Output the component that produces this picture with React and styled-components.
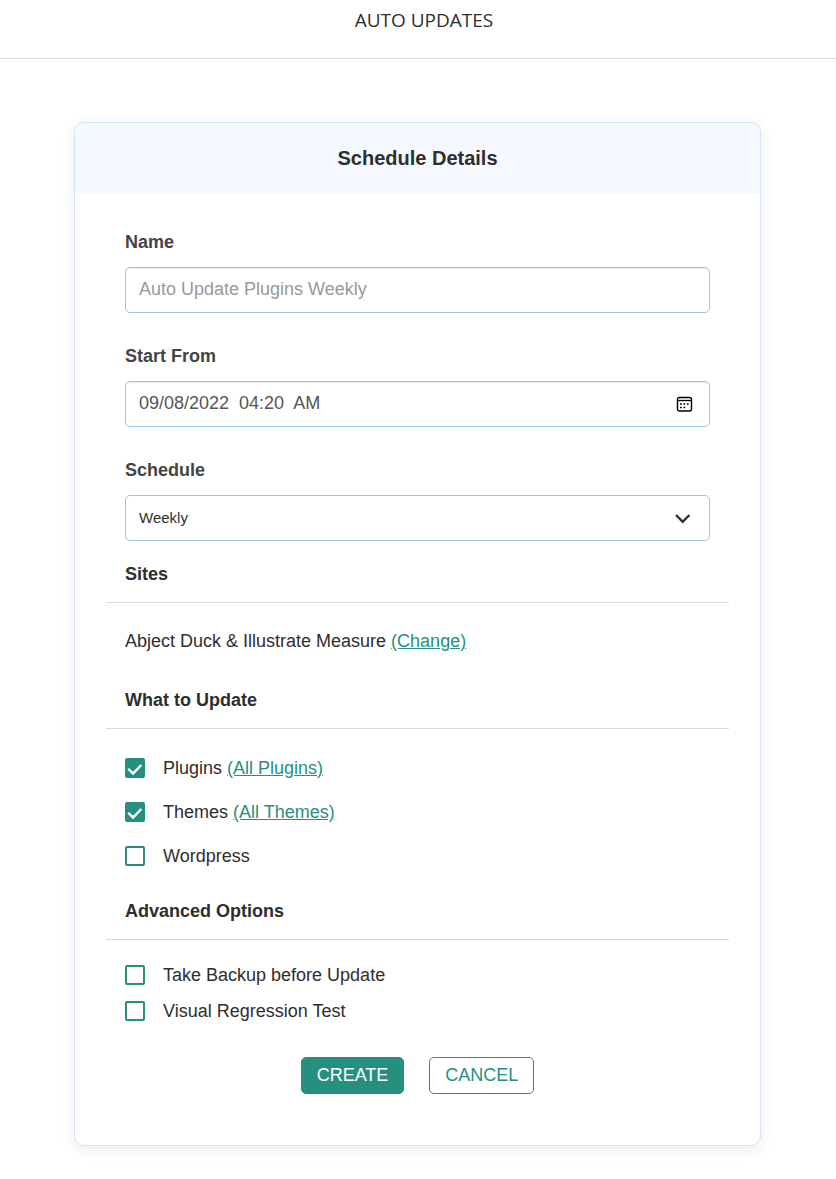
import React, { useState } from 'react';
import styled, { createGlobalStyle, ThemeProvider } from 'styled-components';

const theme = {
  green: '#259080',
  dark: '#2e2e2e',
  label: '#444444',
  placeholder: '#999999',
  fieldBorder: '#9fc3ef',
  cardBorder: '#d2e3fa',
  cardHeader: '#f5f9ff',
  line: '#dadada',
  fontSize: {
    s: '15px',
    m: '18px',
    title: '19px',
    l: '20px',
  },
};

const GlobalStyle = createGlobalStyle`
  *, *::before, *::after {
    box-sizing: border-box;
  }
  body {
    margin: 0;
    background-color: white;
    font-family: "Liberation Sans", Arial, sans-serif;
    font-size: 18px;
    line-height: 20px;
  }
`;

const PageHeader = styled.header`
  padding: 8px 16px 26px 28px;
  border-bottom: 1px solid ${({ theme }) => theme.line};
  text-align: center;
`;

const PageTitle = styled.h1`
  margin: 0;
  color: ${({ theme }) => theme.dark};
  font-family: 'Open Sans', sans-serif;
  font-size: ${({ theme }) => theme.fontSize.title};
  font-weight: 500;
  line-height: 24px;
`;

const Card = styled.main`
  margin: 63px 75px 33px 74px;
  border: 1px solid ${({ theme }) => theme.cardBorder};
  border-radius: 10px;
  box-shadow: 0 3px 16px rgba(0, 0, 0, 0.08);
  overflow: hidden;
`;

const CardHeader = styled.div`
  padding: 25px;
  background-color: ${({ theme }) => theme.cardHeader};
  text-align: center;
`;

const CardTitle = styled.h2`
  margin: 0;
  color: ${({ theme }) => theme.dark};
  font-size: ${({ theme }) => theme.fontSize.l};
  line-height: 20px;
`;

const Form = styled.form`
  padding: 39px 31px 51px;
`;

const Fields = styled.div`
  display: flex;
  flex-direction: column;
  gap: 33px;
  padding: 0 19px;
`;

const Field = styled.div`
  display: flex;
  flex-direction: column;
  gap: 15px;
`;

const Label = styled.label`
  color: ${({ theme }) => theme.label};
  font-weight: bold;
`;

const FieldBox = styled.div`
  display: flex;
  align-items: center;
  height: 46px;
  padding-right: ${({ $icon }) => ($icon ? '16px' : '0')};
  border: 1px solid ${({ theme }) => theme.fieldBorder};
  border-radius: 5px;
  box-shadow: ${({ $inset }) => ($inset ? 'inset 0 1px 1px rgba(0, 0, 0, 0.08)' : 'none')};
`;

const Input = styled.input`
  flex: 1;
  min-width: 0;
  height: 42px;
  padding: 0 13px 2px;
  border: 0;
  outline: 0;
  background-color: transparent;
  color: #555555;
  font-family: inherit;
  font-size: ${({ theme }) => theme.fontSize.m};

  &::placeholder {
    color: ${({ theme }) => theme.placeholder};
  }
`;

const Select = styled.select`
  flex: 1;
  min-width: 0;
  height: 44px;
  padding: 0 13px 2px;
  border: 0;
  outline: 0;
  appearance: none;
  background-color: transparent;
  color: ${({ theme }) => theme.dark};
  font-family: inherit;
  font-size: ${({ theme }) => theme.fontSize.s};
`;

const Section = styled.section`
  margin-top: ${({ $top }) => $top}px;
`;

const SectionTitle = styled.h3`
  margin: 0;
  padding: 0 19px 18px;
  border-bottom: 1px solid ${({ theme }) => theme.line};
  color: ${({ theme }) => theme.dark};
  font-size: ${({ theme }) => theme.fontSize.m};
  line-height: 20px;
`;

const SectionText = styled.p`
  margin: 28px 19px 0;
  color: ${({ theme }) => theme.dark};
`;

const Link = styled.a`
  margin-left: 5px;
  color: ${({ theme }) => theme.green};
  text-decoration: underline;
`;

const Options = styled.div`
  display: flex;
  flex-direction: column;
  gap: ${({ $compact }) => ($compact ? '16px' : '24px')};
  padding: ${({ $compact }) => ($compact ? '25px' : '29px')} 19px 0;
`;

const Option = styled.div`
  display: flex;
  align-items: center;
  color: ${({ theme }) => theme.dark};
`;

const OptionLabel = styled.label`
  display: flex;
  align-items: center;
  gap: 18px;
`;

const Checkbox = styled.input`
  display: grid;
  width: 20px;
  height: 20px;
  margin: 0;
  appearance: none;
  border: 2px solid ${({ theme }) => theme.green};
  border-radius: 2px;

  &:checked {
    background-color: ${({ theme }) => theme.green};
  }
  &:checked::before {
    content: '';
    background-color: white;
    clip-path: polygon(2% 60%, 12% 50%, 38% 74%, 84% 26%, 95% 36%, 38% 95%);
  }
`;

const Buttons = styled.div`
  display: flex;
  justify-content: center;
  gap: 25px;
  margin-top: 36px;
`;

const Button = styled.button`
  height: 37px;
  padding: 0 15px;
  border: 1px solid ${({ theme }) => theme.green};
  border-radius: 5px;
  background-color: ${({ theme, $primary }) => ($primary ? theme.green : 'white')};
  color: ${({ theme, $primary }) => ($primary ? 'white' : theme.green)};
  font-family: inherit;
  font-size: ${({ theme }) => theme.fontSize.m};
`;

const CalendarIcon = () => (
  <svg width="17" height="17" viewBox="0 0 17 17" fill="none" aria-hidden="true">
    <rect x="1.5" y="1.5" width="14" height="13.5" rx="2" stroke="black" strokeWidth="1.4" />
    <path d="M1.5 4.5h14" stroke="black" strokeWidth="1.3" />
    <path
      d="M4 8h1.8M7.4 8h1.8M10.8 8h1.8M4 11.5h1.8M7.4 11.5h1.8"
      stroke="black"
      strokeWidth="1.7"
    />
  </svg>
);

const ChevronIcon = () => (
  <svg width="22" height="16" viewBox="0 0 22 16" fill="none" aria-hidden="true">
    <path d="M5 5l6.7 6.8L18.4 5" stroke="#2e2e2e" strokeWidth="2.4" />
  </svg>
);

const updateOptions = [
  { id: 'plugins', label: 'Plugins', link: '(All Plugins)' },
  { id: 'themes', label: 'Themes', link: '(All Themes)' },
  { id: 'wordpress', label: 'Wordpress' },
];

const advancedOptions = [
  { id: 'backup', label: 'Take Backup before Update' },
  { id: 'regression', label: 'Visual Regression Test' },
];

const OptionList = ({ options, checked, onToggle, compact }) => (
  <Options $compact={compact}>
    {options.map(({ id, label, link }) => (
      <Option key={id}>
        <OptionLabel htmlFor={id}>
          <Checkbox
            type="checkbox"
            id={id}
            checked={Boolean(checked[id])}
            onChange={() => onToggle(id)}
          />
          {label}
        </OptionLabel>
        {link && <Link href="#">{link}</Link>}
      </Option>
    ))}
  </Options>
);

const App = () => {
  const [checked, setChecked] = useState({ plugins: true, themes: true });
  const toggle = (id) => setChecked({ ...checked, [id]: !checked[id] });

  return (
    <ThemeProvider theme={theme}>
      <GlobalStyle />
      <PageHeader>
        <PageTitle>AUTO UPDATES</PageTitle>
      </PageHeader>
      <Card>
        <CardHeader>
          <CardTitle>Schedule Details</CardTitle>
        </CardHeader>
        <Form onSubmit={(e) => e.preventDefault()}>
          <Fields>
            <Field>
              <Label htmlFor="name">Name</Label>
              <FieldBox $inset>
                <Input id="name" type="text" placeholder="Auto Update Plugins Weekly" />
              </FieldBox>
            </Field>
            <Field>
              <Label htmlFor="start">Start From</Label>
              <FieldBox $inset $icon>
                <Input id="start" type="text" defaultValue="09/08/2022  04:20  AM" />
                <CalendarIcon />
              </FieldBox>
            </Field>
            <Field>
              <Label htmlFor="schedule">Schedule</Label>
              <FieldBox $icon>
                <Select id="schedule" defaultValue="weekly">
                  <option value="daily">Daily</option>
                  <option value="weekly">Weekly</option>
                  <option value="monthly">Monthly</option>
                </Select>
                <ChevronIcon />
              </FieldBox>
            </Field>
          </Fields>
          <Section $top={23}>
            <SectionTitle>Sites</SectionTitle>
            <SectionText>
              Abject Duck &amp; Illustrate Measure
              <Link href="#">(Change)</Link>
            </SectionText>
          </Section>
          <Section $top={39}>
            <SectionTitle>What to Update</SectionTitle>
            <OptionList options={updateOptions} checked={checked} onToggle={toggle} />
          </Section>
          <Section $top={35}>
            <SectionTitle>Advanced Options</SectionTitle>
            <OptionList options={advancedOptions} checked={checked} onToggle={toggle} compact />
          </Section>
          <Buttons>
            <Button type="submit" $primary>
              CREATE
            </Button>
            <Button type="button">CANCEL</Button>
          </Buttons>
        </Form>
      </Card>
    </ThemeProvider>
  );
};

export default App;
